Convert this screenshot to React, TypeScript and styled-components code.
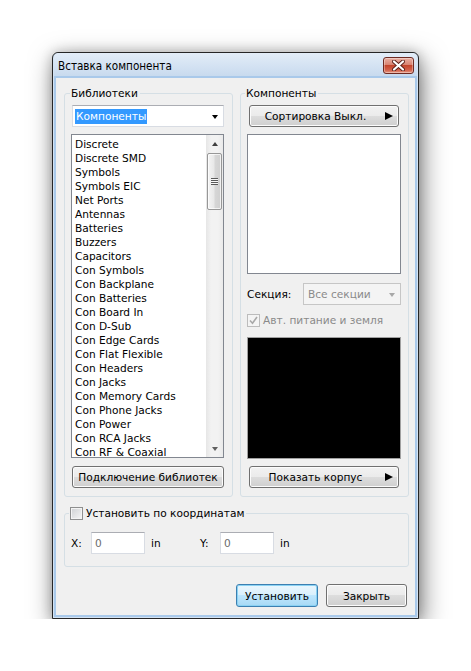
import React from 'react';
import styled, { createGlobalStyle } from 'styled-components';

const GlobalStyle = createGlobalStyle`
  html, body {
    margin: 0;
    padding: 0;
    background: #ffffff;
  }
  body {
    font-family: 'DejaVu Sans', Tahoma, sans-serif;
    font-size: 10.6px;
    color: #000;
  }
  * {
    box-sizing: border-box;
  }
`;

const Page = styled.div`
  padding: 52px 0 0 52px;
`;

const Window = styled.div`
  width: 367px;
  height: 567px;
  display: flex;
  flex-direction: column;
  border: 1px solid #262626;
  border-radius: 6px 6px 0 0;
  background: #d4e3f3;
  padding: 0 1px 1px;
  box-shadow: 3px 8px 26px rgba(0, 0, 0, 0.5), 0 0 12px rgba(0, 0, 0, 0.2);
`;

const TitleBar = styled.div`
  height: 23px;
  flex: none;
  display: flex;
  align-items: flex-start;
  justify-content: space-between;
  padding: 0 3px 0 4px;
  border-radius: 5px 5px 0 0;
  background: linear-gradient(#e3edf8, #c8daee);
`;

const Title = styled.span`
  font-family: 'DejaVu Sans Condensed', 'DejaVu Sans', sans-serif;
  font-size: 11.6px;
  line-height: 23px;
  margin-top: 2px;
  color: #000;
`;

const CloseButton = styled.div`
  margin-top: 4px;
  width: 31px;
  height: 17px;
  border: 1px solid #6e2a22;
  border-radius: 3px;
  display: flex;
  align-items: center;
  justify-content: center;
  background: linear-gradient(#eab0a3 0%, #d98472 45%, #c4452c 50%, #d2604a 80%, #e59a84 100%);
  box-shadow: inset 0 0 0 1px rgba(255, 255, 255, 0.35);
`;

const Client = styled.div`
  flex: 1;
  display: flex;
  flex-direction: column;
  border: 2px solid #a9c9ea;
  background: #f0f0f0;
  padding: 9px 6px 8px 8px;
`;

const TopRow = styled.div`
  display: flex;
  gap: 7px;
`;

const Group = styled.fieldset<{ $width?: number; $height: number; $pad: string; $mt?: number }>`
  margin: ${(p) => p.$mt ?? 0}px 0 0;
  min-width: 0;
  width: ${(p) => (p.$width ? `${p.$width}px` : 'auto')};
  height: ${(p) => p.$height}px;
  border: 1px solid #d5dfe5;
  border-radius: 3px;
  padding: ${(p) => p.$pad};
  display: flex;
  flex-direction: column;
`;

const Legend = styled.legend`
  padding: 0 2px 0 1px;
  margin-left: -2px;
  line-height: 13px;
  display: flex;
  align-items: center;
  gap: 3px;
`;

const Combo = styled.div<{ $disabled?: boolean; $width?: number }>`
  height: 22px;
  width: ${(p) => (p.$width ? `${p.$width}px` : 'auto')};
  flex: none;
  display: flex;
  align-items: center;
  justify-content: space-between;
  padding: 0 5px 0 2px;
  background: ${(p) => (p.$disabled ? '#f4f4f4' : '#fff')};
  border: 1px solid ${(p) => (p.$disabled ? '#c6c6c6' : '#d8dce3')};
  border-top-color: ${(p) => (p.$disabled ? '#c6c6c6' : '#abadb3')};
  color: ${(p) => (p.$disabled ? '#8a8a8a' : '#000')};
`;

const Selected = styled.span`
  background: #3399ff;
  color: #fff;
  line-height: 15px;
  padding: 0 1px;
`;

const ComboText = styled.span`
  padding-left: 2px;
`;

const DropArrow = styled.span<{ $disabled?: boolean }>`
  width: 0;
  height: 0;
  border-left: 3.5px solid transparent;
  border-right: 3.5px solid transparent;
  border-top: 4px solid ${(p) => (p.$disabled ? '#a8a8a8' : '#000')};
  margin-top: 2px;
`;

const LibList = styled.div`
  margin-top: 7px;
  margin-left: -1px;
  height: 324px;
  flex: none;
  border: 1px solid #828790;
  background: #fff;
  display: flex;
  overflow: hidden;
`;

const Items = styled.div`
  flex: 1;
  padding: 2px 0 0 3px;
  line-height: 14px;
  white-space: nowrap;
  overflow: hidden;
`;

const ScrollBar = styled.div`
  width: 17px;
  flex: none;
  display: flex;
  flex-direction: column;
  align-items: center;
  background: linear-gradient(to right, #e6e6e6, #f2f2f2 30%, #f2f2f2 70%, #eaeaea);
`;

const ScrollArrow = styled.div<{ $down?: boolean }>`
  height: 17px;
  flex: none;
  display: flex;
  align-items: center;
  justify-content: center;
  &::after {
    content: '';
    width: 0;
    height: 0;
    border-left: 3.5px solid transparent;
    border-right: 3.5px solid transparent;
    ${(p) =>
      p.$down ? 'border-top: 4px solid #606060;' : 'border-bottom: 4px solid #404040;'}
  }
`;

const Thumb = styled.div`
  margin-top: 1px;
  width: 15px;
  height: 57px;
  border: 1px solid #979797;
  border-radius: 2px;
  background: linear-gradient(to right, #f4f4f4, #e8e8e8 45%, #d6d6d6 55%, #cfcfcf);
  box-shadow: inset 0 0 0 1px rgba(255, 255, 255, 0.7);
  display: flex;
  align-items: center;
  justify-content: center;
`;

const Grip = styled.div`
  width: 7px;
  height: 7px;
  background: repeating-linear-gradient(#5a5a5a 0 1px, #f8f8f8 1px 2px);
`;

const ScrollTrack = styled.div`
  flex: 1;
`;

const Button = styled.div<{ $width?: number; $default?: boolean; $mt?: number }>`
  height: ${(p) => (p.$default !== undefined ? 23 : 22)}px;
  width: ${(p) => (p.$width ? `${p.$width}px` : 'auto')};
  margin-top: ${(p) => p.$mt ?? 0}px;
  flex: none;
  display: flex;
  align-items: center;
  justify-content: center;
  white-space: nowrap;
  border: 1px solid ${(p) => (p.$default ? '#3c7fb1' : '#707070')};
  border-radius: 3px;
  background: ${(p) =>
    p.$default
      ? 'linear-gradient(#eaf6fd 0%, #d9f0fc 50%, #bee6fd 50%, #a7d9f5 100%)'
      : 'linear-gradient(#f2f2f2 0%, #ebebeb 50%, #dddddd 50%, #cfcfcf 100%)'};
  box-shadow: inset 0 0 0 1px ${(p) => (p.$default ? '#8ad2f3' : '#fcfcfc')};
`;

const ArrowButton = styled(Button)`
  margin-left: 2px;
  margin-right: 2px;
  padding: 0 5px 0 0;
`;

const ButtonLabel = styled.span`
  flex: 1;
  text-align: center;
  margin-right: 4px;
`;

const PlayArrow = styled.span`
  width: 0;
  height: 0;
  border-top: 4.5px solid transparent;
  border-bottom: 4.5px solid transparent;
  border-left: 8px solid #000;
`;

const EmptyList = styled.div`
  margin-top: 7px;
  height: 140px;
  flex: none;
  border: 1px solid #828790;
  background: #fff;
`;

const SectionRow = styled.div`
  margin-top: 9px;
  height: 22px;
  display: flex;
  align-items: center;
`;

const SectionLabel = styled.span`
  width: 56px;
`;

const CheckRow = styled.div<{ $disabled?: boolean }>`
  margin-top: 8px;
  height: 14px;
  display: flex;
  align-items: center;
  gap: 3px;
  color: ${(p) => (p.$disabled ? '#8a8a8a' : '#000')};
`;

const CheckBox = styled.span<{ $disabled?: boolean }>`
  width: 13px;
  height: 13px;
  flex: none;
  display: flex;
  align-items: center;
  justify-content: center;
  border: 1px solid ${(p) => (p.$disabled ? '#bcbcbc' : '#8e8f8f')};
  background: ${(p) =>
    p.$disabled ? '#f4f4f4' : 'linear-gradient(135deg, #cfd1d4, #f6f6f6)'};
  box-shadow: inset 0 0 0 1px #f4f4f4;
`;

const Preview = styled.div`
  margin-top: 10px;
  height: 122px;
  flex: none;
  border: 1px solid #a0a0a0;
  background: #000;
`;

const CoordRow = styled.div`
  height: 22px;
  display: flex;
  align-items: center;
`;

const CoordLabel = styled.span`
  width: 20px;
`;

const Input = styled.div`
  width: 54px;
  height: 22px;
  display: flex;
  align-items: center;
  padding-left: 3px;
  background: #fff;
  border: 1px solid #d8dce3;
  border-top-color: #abadb3;
  color: #6d6d6d;
`;

const Unit = styled.span`
  margin-left: 6px;
  width: 49px;
`;

const ButtonRow = styled.div`
  margin-top: 17px;
  padding-right: 2px;
  display: flex;
  justify-content: flex-end;
  gap: 8px;
`;

const libraries = [
  'Discrete',
  'Discrete SMD',
  'Symbols',
  'Symbols EIC',
  'Net Ports',
  'Antennas',
  'Batteries',
  'Buzzers',
  'Capacitors',
  'Con Symbols',
  'Con Backplane',
  'Con Batteries',
  'Con Board In',
  'Con D-Sub',
  'Con Edge Cards',
  'Con Flat Flexible',
  'Con Headers',
  'Con Jacks',
  'Con Memory Cards',
  'Con Phone Jacks',
  'Con Power',
  'Con RCA Jacks',
  'Con RF & Coaxial',
];

const CloseIcon = () => (
  <svg width="13" height="11" viewBox="0 0 13 11">
    <path d="M2 1.5 L11 9.5 M11 1.5 L2 9.5" stroke="#5a1f18" strokeWidth="4" strokeLinecap="round" />
    <path d="M2 1.5 L11 9.5 M11 1.5 L2 9.5" stroke="#ffffff" strokeWidth="2.2" strokeLinecap="round" />
  </svg>
);

const CheckMark = () => (
  <svg width="9" height="9" viewBox="0 0 9 9">
    <path d="M1 4.5 L3.5 7.2 L8 1" fill="none" stroke="#a8a8a8" strokeWidth="1.6" />
  </svg>
);

const App = () => {
  return (
    <>
      <GlobalStyle />
      <Page>
        <Window>
          <TitleBar>
            <Title>Вставка компонента</Title>
            <CloseButton>
              <CloseIcon />
            </CloseButton>
          </TitleBar>
          <Client>
            <TopRow>
              <Group $width={169} $height={410} $pad="5px 8px 8px 7px">
                <Legend>Библиотеки</Legend>
                <Combo>
                  <Selected>Компоненты</Selected>
                  <DropArrow />
                </Combo>
                <LibList>
                  <Items>
                    {libraries.map((name) => (
                      <div key={name}>{name}</div>
                    ))}
                  </Items>
                  <ScrollBar>
                    <ScrollArrow />
                    <Thumb>
                      <Grip />
                    </Thumb>
                    <ScrollTrack />
                    <ScrollArrow $down />
                  </ScrollBar>
                </LibList>
                <Button $mt={8}>Подключение библиотек</Button>
              </Group>
              <Group $width={169} $height={410} $pad="5px 7px 8px 6px">
                <Legend>Компоненты</Legend>
                <ArrowButton>
                  <ButtonLabel>Сортировка Выкл.</ButtonLabel>
                  <PlayArrow />
                </ArrowButton>
                <EmptyList />
                <SectionRow>
                  <SectionLabel>Секция:</SectionLabel>
                  <Combo $disabled $width={98}>
                    <ComboText>Все секции</ComboText>
                    <DropArrow $disabled />
                  </Combo>
                </SectionRow>
                <CheckRow $disabled>
                  <CheckBox $disabled>
                    <CheckMark />
                  </CheckBox>
                  Авт. питание и земля
                </CheckRow>
                <Preview />
                <ArrowButton $mt={7}>
                  <ButtonLabel>Показать корпус</ButtonLabel>
                  <PlayArrow />
                </ArrowButton>
              </Group>
            </TopRow>
            <Group $height={60} $mt={10} $pad="12px 6px 12px 6px">
              <Legend>
                <CheckBox />
                Установить по координатам
              </Legend>
              <CoordRow>
                <CoordLabel>X:</CoordLabel>
                <Input>0</Input>
                <Unit>in</Unit>
                <CoordLabel>Y:</CoordLabel>
                <Input>0</Input>
                <Unit>in</Unit>
              </CoordRow>
            </Group>
            <ButtonRow>
              <Button $width={82} $default>
                Установить
              </Button>
              <Button $width={81} $default={false}>
                Закрыть
              </Button>
            </ButtonRow>
          </Client>
        </Window>
      </Page>
    </>
  );
};

export default App;
